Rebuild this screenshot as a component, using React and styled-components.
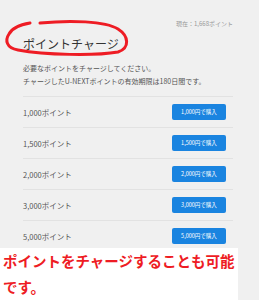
import React from "react";
import styled, { createGlobalStyle } from "styled-components";

const GlobalStyle = createGlobalStyle`
  html, body {
    margin: 0;
    padding: 0;
    background: #f0f0f0;
    font-family: "Noto Sans CJK JP", "Noto Sans", sans-serif;
  }
`;

const plans = [
  { points: "1,000", price: "1,000" },
  { points: "1,500", price: "1,500" },
  { points: "2,000", price: "2,000" },
  { points: "3,000", price: "3,000" },
  { points: "5,000", price: "5,000" },
];

const App = () => {
  return (
    <Wrapper>
      <GlobalStyle />
      <Balance>現在：1,668ポイント</Balance>
      <TitleBox>
        <h2>ポイントチャージ</h2>
        <Circle viewBox="0 0 140 60" width="140" height="60">
          <path
            d="M40 23 C70 20, 105 21, 118 29 C129 36, 130 48, 118 52 C95 56, 45 55, 18 50 C6 48, 5 40, 9 34 C12 28, 18 25, 30 23"
            fill="none"
            stroke="#ee1c24"
            strokeWidth="3"
            strokeLinecap="round"
          />
        </Circle>
      </TitleBox>
      <Desc>
        <p>必要なポイントをチャージしてください。</p>
        <p>チャージしたU-NEXTポイントの有効期限は180日間です。</p>
      </Desc>
      <PlanList>
        {plans.map((plan) => (
          <li key={plan.points}>
            <span>{plan.points}ポイント</span>
            <BuyButton>{plan.price}円で購入</BuyButton>
          </li>
        ))}
      </PlanList>
      <Note>
        ポイントをチャージすることも可能
        <br />
        です。
      </Note>
    </Wrapper>
  );
};

const Wrapper = styled.main`
  position: relative;
  width: 259px;
  height: 300px;
  overflow: hidden;
  padding: 20px 26px 0 23px;
  box-sizing: border-box;
`;

const Balance = styled.div`
  text-align: right;
  font-size: 6px;
  line-height: 8px;
  color: #9a9a9a;
`;

const TitleBox = styled.div`
  h2 {
    margin: 8px 0 0;
    font-size: 12px;
    line-height: 16px;
    font-weight: 400;
    color: #333;
  }
`;

const Circle = styled.svg`
  position: absolute;
  left: 0;
  top: 0;
`;

const Desc = styled.div`
  margin-top: 10px;
  p {
    margin: 0;
    font-size: 7px;
    line-height: 13px;
    color: #555;
  }
`;

const PlanList = styled.ul`
  list-style: none;
  margin: 8px 0 0;
  padding: 0;
  border-top: 1px solid #e2e2e2;
  li {
    display: flex;
    justify-content: space-between;
    align-items: center;
    height: 30px;
    border-bottom: 1px solid #e2e2e2;
    padding-right: 7px;
    span {
      font-size: 7.5px;
      color: #555;
    }
  }
`;

const BuyButton = styled.button`
  width: 54px;
  height: 16px;
  border: none;
  border-radius: 2px;
  background: #1a84e0;
  color: #fff;
  font-family: inherit;
  font-size: 5.5px;
  padding: 0;
`;

const Note = styled.div`
  position: absolute;
  left: 0;
  top: 248px;
  width: 238px;
  height: 52px;
  background: #fff;
  padding-left: 3px;
  box-sizing: border-box;
  color: #ee1c24;
  font-size: 14.5px;
  font-weight: 700;
  line-height: 26px;
  white-space: nowrap;
`;

export default App;
